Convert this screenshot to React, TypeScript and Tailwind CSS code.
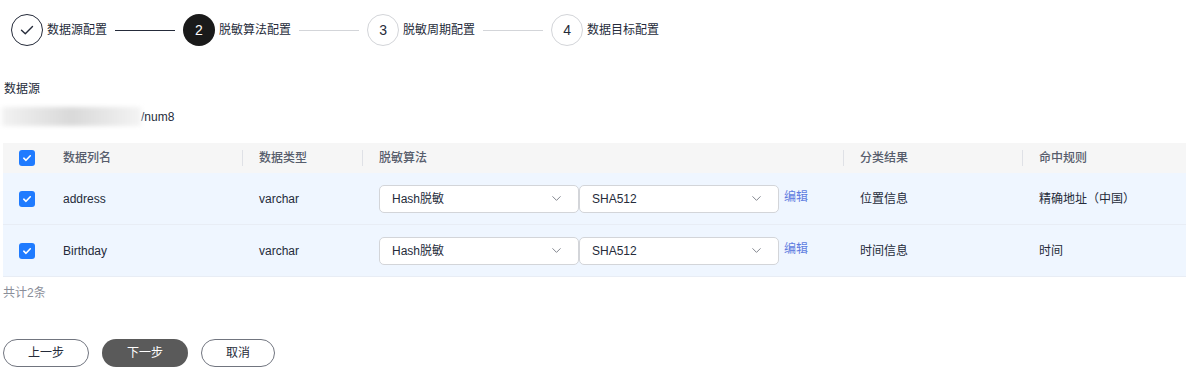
import { ChevronDown } from 'lucide-react'

const font = { fontFamily: '"Liberation Sans", "Noto Sans CJK SC", sans-serif' }

type Row = {
  name: string
  type: string
  algo: string
  param: string
  result: string
  rule: string
}

const rows: Row[] = [
  { name: 'address', type: 'varchar', algo: 'Hash脱敏', param: 'SHA512', result: '位置信息', rule: '精确地址（中国）' },
  { name: 'Birthday', type: 'varchar', algo: 'Hash脱敏', param: 'SHA512', result: '时间信息', rule: '时间' },
]

function Checkbox() {
  return (
    <span className="flex h-4 w-4 items-center justify-center rounded-[3px] bg-[#1f7bff]">
      <svg width="10" height="10" viewBox="0 0 10 10" fill="none">
        <path d="M1.8 5.2 L4 7.3 L8.3 2.8" stroke="white" strokeWidth="1.6" strokeLinecap="round" strokeLinejoin="round" />
      </svg>
    </span>
  )
}

function Select({ value }: { value: string }) {
  return (
    <div className="flex h-[28px] w-[200px] items-center justify-between rounded-[5px] border border-[#d3d5d9] bg-white pl-[12px] pr-[14px] text-[12px] text-[#252b3a]">
      <span>{value}</span>
      <ChevronDown size={15} strokeWidth={1.4} className="text-[#71757f]" />
    </div>
  )
}

function Step({ label, num, state }: { label: string; num: string; state: 'done' | 'active' | 'todo' }) {
  return (
    <div className="flex items-center">
      {state === 'done' && (
        <span className="flex h-8 w-8 items-center justify-center rounded-full border border-[#252b3a]">
          <svg width="16" height="16" viewBox="0 0 16 16" fill="none">
            <path d="M2.5 8.2 L6.3 11.8 L13.5 4.5" stroke="#252b3a" strokeWidth="1.4" strokeLinecap="round" strokeLinejoin="round" />
          </svg>
        </span>
      )}
      {state === 'active' && (
        <span className="flex h-8 w-8 items-center justify-center rounded-full bg-[#1a1a1a] text-[14px] text-white">{num}</span>
      )}
      {state === 'todo' && (
        <span className="flex h-8 w-8 items-center justify-center rounded-full border border-[#d3d5d9] text-[14px] text-[#252b3a]">{num}</span>
      )}
      <span className="ml-[4px] text-[12px] text-[#252b3a]">{label}</span>
    </div>
  )
}

function Line({ dark }: { dark?: boolean }) {
  return <div className={`mx-[8px] h-px w-[60px] ${dark ? 'bg-[#252b3a]' : 'bg-[#d3d5d9]'}`} />
}

export default function App() {
  return (
    <div style={font} className="h-[371px] w-[1186px] overflow-hidden bg-white text-[#252b3a]">
      {/* Steps */}
      <div className="flex items-center pl-[11px] pt-[14px]">
        <Step label="数据源配置" num="1" state="done" />
        <Line dark />
        <Step label="脱敏算法配置" num="2" state="active" />
        <Line />
        <Step label="脱敏周期配置" num="3" state="todo" />
        <Line />
        <Step label="数据目标配置" num="4" state="todo" />
      </div>

      <div className="pl-[3px]">
        {/* Data source */}
        <div className="mt-[36px] pl-[1px] text-[12px] leading-[14px]">数据源</div>
        <div className="mt-[11px] flex h-[19px] items-center text-[12px]">
          <div className="-ml-[1px] h-[19px] w-[139px] bg-gradient-to-r from-[#f2f2f2] via-[#d9d9d9] to-[#f4f4f4] blur-[2px]" />
          <span>/num8</span>
        </div>

        {/* Table */}
        <div className="mt-[17px] text-[12px]">
          <div className="flex h-[30px] items-center bg-[#f6f6f6] font-medium text-[#575d6c]">
            <div className="flex w-[44px] pl-[16px]">
              <Checkbox />
            </div>
            <div className="flex w-[196px] items-center justify-between pl-[16px]">
              <span>数据列名</span>
              <span className="h-4 w-px bg-[#dfe1e6]" />
            </div>
            <div className="flex w-[120px] items-center justify-between pl-[16px]">
              <span>数据类型</span>
              <span className="h-4 w-px bg-[#dfe1e6]" />
            </div>
            <div className="flex w-[481px] items-center justify-between pl-[16px]">
              <span>脱敏算法</span>
              <span className="h-4 w-px bg-[#dfe1e6]" />
            </div>
            <div className="flex w-[179px] items-center justify-between pl-[16px]">
              <span>分类结果</span>
              <span className="h-4 w-px bg-[#dfe1e6]" />
            </div>
            <div className="flex-1 pl-[16px]">命中规则</div>
          </div>

          {rows.map((r) => (
            <div key={r.name} className="flex h-[52px] items-center border-b border-[#e8edf5] bg-[#eff6ff] text-[#252b3a]">
              <div className="flex w-[44px] pl-[16px]">
                <Checkbox />
              </div>
              <div className="w-[196px] pl-[16px]">{r.name}</div>
              <div className="w-[120px] pl-[16px]">{r.type}</div>
              <div className="flex w-[481px] items-center pl-[16px]">
                <Select value={r.algo} />
                <Select value={r.param} />
                <span className="ml-[5px] -mt-[4px] text-[#5e7ce0]">编辑</span>
              </div>
              <div className="w-[179px] pl-[16px]">{r.result}</div>
              <div className="flex-1 pl-[16px]">{r.rule}</div>
            </div>
          ))}
        </div>

        <div className="mt-[7px] text-[12px] text-[#8a8e99]">共计2条</div>

        {/* Actions */}
        <div className="mt-[37px] flex gap-[13px] text-[12px]">
          <button className="h-[28px] w-[86px] rounded-full border border-[#71757f] bg-white text-[#252b3a]">上一步</button>
          <button className="h-[28px] w-[86px] rounded-full bg-[#5a5a5a] text-white">下一步</button>
          <button className="h-[28px] w-[74px] rounded-full border border-[#71757f] bg-white text-[#252b3a]">取消</button>
        </div>
      </div>
    </div>
  )
}
